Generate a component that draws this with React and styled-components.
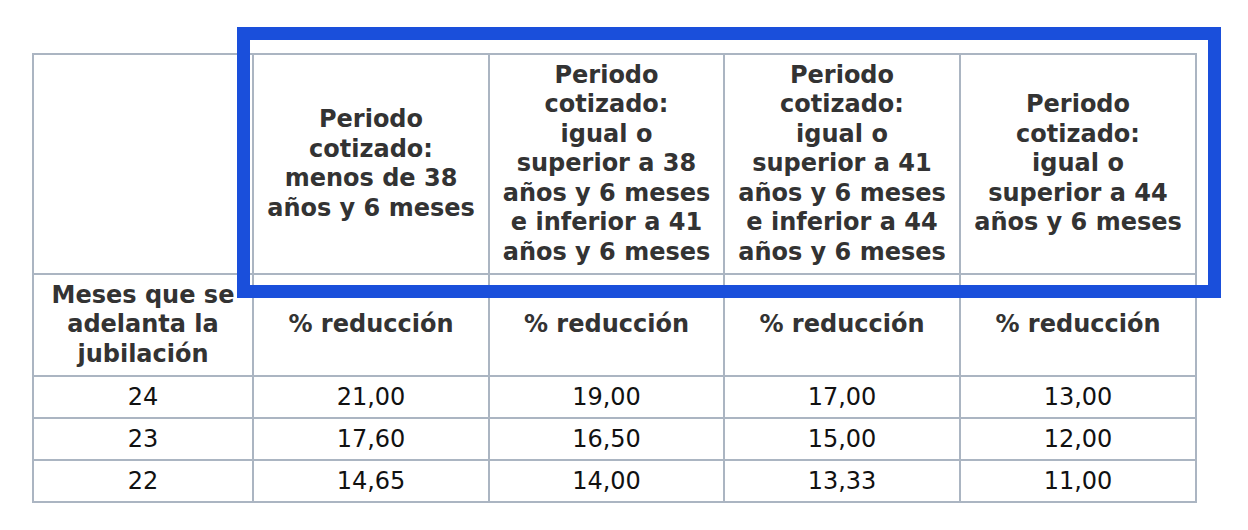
import styled, { createGlobalStyle } from "styled-components";

const GlobalStyle = createGlobalStyle`
    html, body {
        margin: 0;
        padding: 0;
        background: #ffffff;
    }
    body {
        font-family: "DejaVu Sans", Verdana, sans-serif;
    }
`;

const columns = [
    ["Periodo", "cotizado:", "menos de 38", "años y 6 meses"],
    ["Periodo", "cotizado:", "igual o", "superior a 38", "años y 6 meses", "e inferior a 41", "años y 6 meses"],
    ["Periodo", "cotizado:", "igual o", "superior a 41", "años y 6 meses", "e inferior a 44", "años y 6 meses"],
    ["Periodo", "cotizado:", "igual o", "superior a 44", "años y 6 meses"],
];

const rows = [
    ["24", "21,00", "19,00", "17,00", "13,00"],
    ["23", "17,60", "16,50", "15,00", "12,00"],
    ["22", "14,65", "14,00", "13,33", "11,00"],
];

const widths = [220, 236, 235, 236, 236];

function App() {
    return (
        <>
            <GlobalStyle />
            <Page>
                <Frame>
                    <Table>
                        <colgroup>
                            {widths.map((w, i) => (
                                <col key={i} style={{ width: w }} />
                            ))}
                        </colgroup>
                        <tbody>
                            <Row $h={220}>
                                <HeadCell />
                                {columns.map((lines, i) => (
                                    <HeadCell key={i}>
                                        {lines.map((l, j) => (
                                            <Line key={j}>{l}</Line>
                                        ))}
                                    </HeadCell>
                                ))}
                            </Row>
                            <Row $h={102}>
                                <HeadCell>
                                    <Line>Meses que se</Line>
                                    <Line>adelanta la</Line>
                                    <Line>jubilación</Line>
                                </HeadCell>
                                {columns.map((_, i) => (
                                    <HeadCell key={i}>% reducción</HeadCell>
                                ))}
                            </Row>
                            {rows.map((r, i) => (
                                <Row key={i} $h={42}>
                                    {r.map((v, j) => (
                                        <DataCell key={j}>{v}</DataCell>
                                    ))}
                                </Row>
                            ))}
                        </tbody>
                    </Table>
                    <Highlight />
                </Frame>
            </Page>
        </>
    );
}

const Page = styled.div`
    width: 1248px;
    height: 530px;
    overflow: hidden;
    padding: 53px 0 0 32px;
    box-sizing: border-box;
`;

const Frame = styled.div`
    position: relative;
    width: 1165px;
`;

const Table = styled.table`
    border-collapse: collapse;
    table-layout: fixed;
    width: 1165px;
    border: 2px solid #abb5c2;
`;

const Row = styled.tr`
    height: ${(p) => p.$h}px;
`;

const HeadCell = styled.td`
    border: 2px solid #abb5c2;
    padding: 0 6px;
    text-align: center;
    vertical-align: middle;
    font-weight: bold;
    font-size: 24px;
    line-height: 29.5px;
    color: #333333;
`;

const Line = styled.div`
    white-space: nowrap;
`;

const DataCell = styled.td`
    border: 2px solid #abb5c2;
    padding: 0 6px;
    text-align: center;
    vertical-align: middle;
    font-size: 24px;
    line-height: 28px;
    color: #111111;
`;

const Highlight = styled.div`
    position: absolute;
    left: 205px;
    top: -26px;
    width: 984px;
    height: 271px;
    box-sizing: border-box;
    border: 13px solid #1a4fdb;
    pointer-events: none;
`;

export default App;
